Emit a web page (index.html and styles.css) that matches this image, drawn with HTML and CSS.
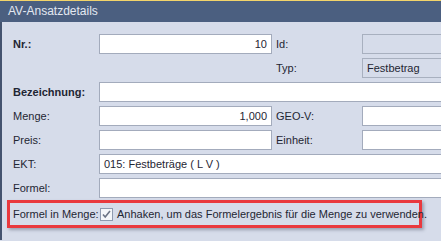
FILE: index.html
```html
<!DOCTYPE html>
<html lang="de">
  <head>
    <meta charset="utf-8">
    <link rel="stylesheet" href="styles.css">
  </head>
  <body>
    <div class="panel">
      <div class="caption">AV-Ansatzdetails</div>
      <div class="content">
        <div class="form">
          <label class="bold">Nr.:</label>
          <div class="field num">10</div>
          <label class="side">Id:</label>
          <div class="field ro edge"></div>

          <div></div>
          <div></div>
          <label class="side">Typ:</label>
          <div class="field ro edge">Festbetrag</div>

          <label class="bold">Bezeichnung:</label>
          <div class="field wide edge"></div>

          <label>Menge:</label>
          <div class="field num">1,000</div>
          <label class="side">GEO-V:</label>
          <div class="field edge"></div>

          <label>Preis:</label>
          <div class="field"></div>
          <label class="side">Einheit:</label>
          <div class="field edge"></div>

          <label>EKT:</label>
          <div class="field wide edge">015: Festbeträge ( L V )</div>

          <label>Formel:</label>
          <div class="field wide edge"></div>
        </div>
        <div class="highlight">
          <label class="hl-label">Formel in Menge:</label>
          <span class="check">
            <svg width="13" height="13" viewBox="0 0 13 13">
              <rect x="0.5" y="0.5" width="12" height="12" fill="#f4f6fa" stroke="#8e9ab0"/>
              <path d="M3 6.5 L5.2 9 L10 3" fill="none" stroke="#6c7486" stroke-width="1.6"/>
            </svg>
          </span>
          <span class="hl-text">Anhaken, um das Formelergebnis für die Menge zu verwenden.</span>
        </div>
      </div>
    </div>
  </body>
</html>
```

FILE: styles.css
```css
html, body {
  margin: 0;
  overflow: hidden;
}
body {
  width: 441px;
  height: 241px;
  font-family: "Liberation Sans", Arial, sans-serif;
  font-size: 11px;
  color: #1f2633;
  background: #d6dcea;
}
.panel {
  border-top: 1px solid #f3d46a;
  height: 240px;
}
.caption {
  height: 21px;
  line-height: 21px;
  padding-left: 8px;
  background: #4b5f80;
  color: #e3e8f1;
  font-size: 12px;
}
.content {
  border-left: 2px solid #44536f;
  height: 218px;
  padding-top: 12px;
  box-sizing: border-box;
}
.form {
  display: grid;
  grid-template-columns: 86px 173px 90px 1fr;
  grid-auto-rows: 20px;
  row-gap: 4px;
  padding-left: 11px;
}
.form label {
  display: flex;
  align-items: center;
  white-space: nowrap;
}
.form .bold {
  font-weight: bold;
}
.form .side {
  padding-left: 4px;
}
.field {
  background: #fff;
  border: 1px solid #a3abbc;
  box-sizing: border-box;
  display: flex;
  align-items: center;
  padding: 0 4px;
  white-space: nowrap;
}
.field.num {
  justify-content: flex-end;
}
.field.ro {
  background: #d6dcea;
  border-color: #a8b0bf;
}
.field.wide {
  grid-column: 2 / 5;
}
.field.edge {
  border-right: 0;
}
.highlight {
  margin: 2px 0 0 5px;
  width: 415px;
  height: 28px;
  box-sizing: border-box;
  border: 3px solid #e9393e;
  box-shadow: 2px 2px 3px rgba(40, 50, 70, 0.35);
  display: flex;
  align-items: center;
}
.hl-label {
  flex: 0 0 auto;
  width: 87px;
  padding-left: 3px;
  white-space: nowrap;
}
.check {
  flex: 0 0 auto;
  display: flex;
  width: 17px;
}
.hl-text {
  white-space: nowrap;
}
```
